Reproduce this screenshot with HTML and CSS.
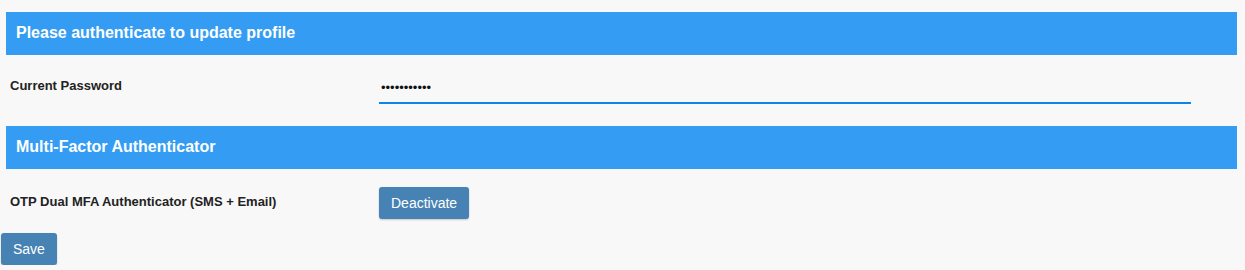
FILE: index.html
```html
<!DOCTYPE html>
<html lang="en">
<head>
    <meta charset="UTF-8">
    <title>Update Profile</title>
    <link rel="stylesheet" href="styles.css">
</head>
<body>
    <form class="profile-form" onsubmit="return false;">
        <div class="section-header">Please authenticate to update profile</div>
        <div class="form-row pw-row">
            <label class="form-label" for="currentPassword">Current Password</label>
            <div class="form-field">
                <input type="password" id="currentPassword" class="pw-input" value="abcdefghijk">
            </div>
        </div>

        <div class="section-header">Multi-Factor Authenticator</div>
        <div class="form-row mfa-row">
            <label class="form-label">OTP Dual MFA Authenticator (SMS + Email)</label>
            <div class="form-field">
                <button type="button" class="btn">Deactivate</button>
            </div>
        </div>

        <div class="form-actions">
            <button type="submit" class="btn">Save</button>
        </div>
    </form>
</body>
</html>
```

FILE: styles.css
```css
body {
    margin: 0;
    padding: 12px 0 0 0;
    font-family: Arial, "Liberation Sans", sans-serif;
    background: #f8f8f8;
    color: #222;
}

.section-header {
    margin: 0 8px 0 6px;
    height: 43px;
    line-height: 42px;
    padding-left: 10px;
    background: #349df3;
    color: #fff;
    font-size: 16px;
    font-weight: bold;
}

.form-row {
    display: flex;
    align-items: center;
}

.pw-row {
    margin: 15px 0 22px 0;
}

.pw-row .form-label {
    margin-top: -4px;
}

.mfa-row {
    margin: 18px 0 14px 0;
}

.form-label {
    width: 369px;
    padding-left: 10px;
    font-size: 13px;
    font-weight: bold;
    color: #222;
}

.mfa-row .form-label {
    margin-top: -4px;
}

.form-field {
    flex: 0 0 812px;
}

.pw-input {
    display: block;
    width: 100%;
    height: 34px;
    box-sizing: border-box;
    padding: 3px 2px 0 2px;
    border: none;
    border-bottom: 2px solid #0a86ea;
    background: transparent;
    font-family: Arial, "Liberation Sans", sans-serif;
    font-size: 13px;
    color: #111;
    outline: none;
}

.btn {
    height: 32px;
    padding: 0 12px;
    background: #4682b4;
    color: #fff;
    border: none;
    border-radius: 3px;
    box-shadow: 0 1px 2px rgba(0,0,0,0.2);
    font-family: Arial, "Liberation Sans", sans-serif;
    font-size: 14px;
    cursor: pointer;
}

.form-actions {
    padding-left: 1px;
}
```
